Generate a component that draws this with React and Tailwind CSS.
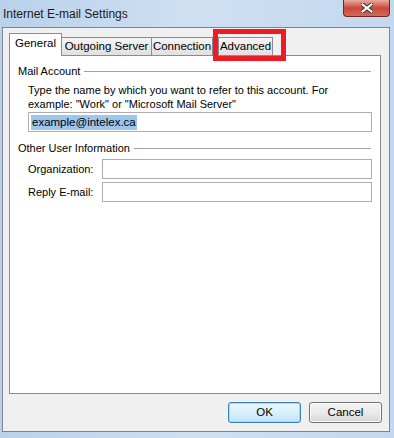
const FONT = { fontFamily: '"Liberation Sans", Arial, sans-serif' }

function GroupHeader({ title }) {
  return (
    <div className="flex items-center h-[14px] ml-[8px] mr-[9px]">
      <span className="pr-[4px] text-[#000]">{title}</span>
      <div className="flex-1 h-px bg-[#a0a0a0]" />
    </div>
  )
}

function TextBox({ className = '', children }) {
  return (
    <div className={'h-[20px] border border-[#abadb3] bg-white flex items-center px-[2px] ' + className}>
      {children}
    </div>
  )
}

function Tab({ label, active, width, className = '' }) {
  if (active) {
    return (
      <div
        className="h-[23px] -mb-px relative z-10 bg-white border border-b-0 border-[#898c95] flex items-center justify-center pb-[2px] text-[11.5px]"
        style={{ width }}
      >
        {label}
      </div>
    )
  }
  return (
    <div
      className={'h-[18px] bg-gradient-to-b from-[#f4f4f4] to-[#e0e0e0] border border-b-0 border-[#898c95] flex items-center justify-center text-[11.5px] ' + className}
      style={{ width }}
    >
      {label}
    </div>
  )
}

export default function App() {
  return (
    <div
      className="w-[394px] h-[438px] relative overflow-hidden bg-gradient-to-r from-[#b9d1ea] via-[#cfe0f2] to-[#c3d8ee] text-[11px] text-black flex flex-col"
      style={FONT}
    >
      {/* Title bar */}
      <div className="h-[27px] flex items-start shrink-0">
        <div className="pl-[3px] pt-[5px] text-[12px] text-[#1a1a1a]">Internet E-mail Settings</div>
        <div className="ml-auto mr-[4px] w-[47px] h-[17px] rounded-b-[4px] border border-t-0 border-[#6d2a25] bg-gradient-to-b from-[#e8a99f] via-[#c9483a] to-[#d5675a] flex items-center justify-center">
          <svg width="12" height="10" viewBox="0 0 12 10">
            <path d="M1 1 L11 9 M11 1 L1 9" stroke="#3a3a3a" strokeWidth="4" strokeLinecap="square" />
            <path d="M1.5 1.5 L10.5 8.5 M10.5 1.5 L1.5 8.5" stroke="#fff" strokeWidth="2" strokeLinecap="square" />
          </svg>
        </div>
      </div>

      {/* Client area */}
      <div className="ml-[2px] mr-[4px] h-[405px] border border-[#7b8591] bg-[#f0f0f0] flex flex-col">
        <div className="ml-[6px] mr-[8px] mt-[4px] flex flex-col">
          <div className="flex items-end h-[23px]">
            <Tab label="General" active width={53} />
            <Tab label="Outgoing Server" width={91} className="-ml-px" />
            <Tab label="Connection" width={62} className="-ml-px" />
            <Tab label="Advanced" width={55} className="ml-[5px]" />
          </div>
          <div className="h-[339px] bg-white border border-[#898c95] flex flex-col">
            <div className="mt-[8px]">
              <GroupHeader title="Mail Account" />
            </div>
            <div className="ml-[18px] mr-[9px] mt-[5px] leading-[14px]">
              <p>Type the name by which you want to refer to this account. For</p>
              <p>example: "Work" or "Microsoft Mail Server"</p>
            </div>
            <TextBox className="ml-[18px] mr-[8px] mt-[1px]">
              <span className="bg-[#9cc6ee] leading-[15px] px-px text-[11.5px]">example@intelex.ca</span>
            </TextBox>
            <div className="mt-[9px]">
              <GroupHeader title="Other User Information" />
            </div>
            <div className="ml-[18px] mr-[8px] mt-[4px] flex flex-col gap-[3px]">
              <div className="flex items-center">
                <span className="w-[74px]">Organization:</span>
                <TextBox className="flex-1" />
              </div>
              <div className="flex items-center">
                <span className="w-[74px]">Reply E-mail:</span>
                <TextBox className="flex-1" />
              </div>
            </div>
          </div>
        </div>

        {/* Buttons */}
        <div className="flex justify-end gap-[8px] mt-[8px] mr-[7px]">
          <button className="w-[73px] h-[21px] rounded-[3px] border border-[#3c7fb1] bg-gradient-to-b from-[#eaf6fd] via-[#d9f0fc] to-[#bee6fd] shadow-[inset_0_0_0_1px_#9fdcf7] text-[11.5px]">
            OK
          </button>
          <button className="w-[73px] h-[21px] rounded-[3px] border border-[#707070] bg-gradient-to-b from-[#f2f2f2] via-[#ebebeb] to-[#d6d6d6] shadow-[inset_0_0_0_1px_#fcfcfc] text-[11.5px]">
            Cancel
          </button>
        </div>
      </div>

      {/* Red highlight around Advanced tab */}
      <div className="absolute left-[213px] top-[29px] w-[73px] h-[32px] border-[5px] border-[#ed1c24]" />
    </div>
  )
}
